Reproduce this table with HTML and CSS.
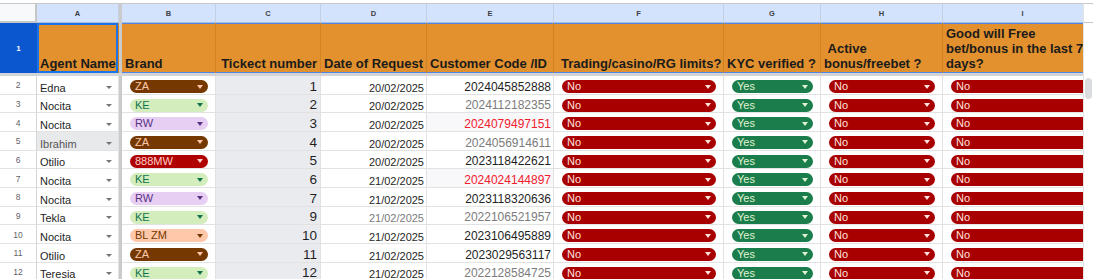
FILE: index.html
```html
<!DOCTYPE html>
<html>
<head>
<meta charset="utf-8">
<link rel="stylesheet" href="styles.css">
</head>
<body>
<div class="frame">
  <div class="viewport">
    <div class="grid">
      <div class="vdiv"></div>
      <div class="hdiv"></div>

      <div class="corner"></div>
      <div class="colh">A</div>
      <div class="colh">B</div>
      <div class="colh">C</div>
      <div class="colh">D</div>
      <div class="colh">E</div>
      <div class="colh">F</div>
      <div class="colh">G</div>
      <div class="colh">H</div>
      <div class="colh">I</div>

      <div class="rowh1">1</div>
      <div class="h active"><span>Agent Name</span></div>
      <div class="h"><span>Brand</span></div>
      <div class="h right"><span>Tickect number</span></div>
      <div class="h"><span>Date of Request</span></div>
      <div class="h"><span>Customer Code /ID</span></div>
      <div class="h pad-f"><span>Trading/casino/RG limits?</span></div>
      <div class="h"><span>KYC verified ?</span></div>
      <div class="h"><span>&nbsp;Active<br>bonus/freebet ?</span></div>
      <div class="h"><span>Good will Free<br>bet/bonus in the last 7<br>days?</span></div>

      <div class="c rh">2</div>
      <div class="c ag"><span>Edna</span><i class="dd"></i></div>
      <div class="c cc"><div class="chip za"><span>ZA</span><i class="tri"></i></div></div>
      <div class="c num">1</div>
      <div class="c dt">20/02/2025</div>
      <div class="c code">2024045852888</div>
      <div class="c cc"><div class="chip no"><span>No</span><i class="tri"></i></div></div>
      <div class="c cc"><div class="chip yes"><span>Yes</span><i class="tri"></i></div></div>
      <div class="c cc"><div class="chip no"><span>No</span><i class="tri"></i></div></div>
      <div class="c cc"><div class="chip no"><span>No</span><i class="tri"></i></div></div>

      <div class="c rh">3</div>
      <div class="c ag"><span>Nocita</span><i class="dd"></i></div>
      <div class="c cc"><div class="chip ke"><span>KE</span><i class="tri"></i></div></div>
      <div class="c num">2</div>
      <div class="c dt">20/02/2025</div>
      <div class="c code grey">2024112182355</div>
      <div class="c cc"><div class="chip no"><span>No</span><i class="tri"></i></div></div>
      <div class="c cc"><div class="chip yes"><span>Yes</span><i class="tri"></i></div></div>
      <div class="c cc"><div class="chip no"><span>No</span><i class="tri"></i></div></div>
      <div class="c cc"><div class="chip no"><span>No</span><i class="tri"></i></div></div>

      <div class="c rh">4</div>
      <div class="c ag"><span>Nocita</span><i class="dd"></i></div>
      <div class="c cc"><div class="chip rw"><span>RW</span><i class="tri"></i></div></div>
      <div class="c num">3</div>
      <div class="c dt">20/02/2025</div>
      <div class="c code red">2024079497151</div>
      <div class="c cc"><div class="chip no"><span>No</span><i class="tri"></i></div></div>
      <div class="c cc"><div class="chip yes"><span>Yes</span><i class="tri"></i></div></div>
      <div class="c cc"><div class="chip no"><span>No</span><i class="tri"></i></div></div>
      <div class="c cc"><div class="chip no"><span>No</span><i class="tri"></i></div></div>

      <div class="c rh">5</div>
      <div class="c ag hover"><span>Ibrahim</span><i class="dd"></i></div>
      <div class="c cc"><div class="chip za"><span>ZA</span><i class="tri"></i></div></div>
      <div class="c num">4</div>
      <div class="c dt">20/02/2025</div>
      <div class="c code grey">2024056914611</div>
      <div class="c cc"><div class="chip no"><span>No</span><i class="tri"></i></div></div>
      <div class="c cc"><div class="chip yes"><span>Yes</span><i class="tri"></i></div></div>
      <div class="c cc"><div class="chip no"><span>No</span><i class="tri"></i></div></div>
      <div class="c cc"><div class="chip no"><span>No</span><i class="tri"></i></div></div>

      <div class="c rh">6</div>
      <div class="c ag"><span>Otilio</span><i class="dd"></i></div>
      <div class="c cc"><div class="chip mw"><span>888MW</span><i class="tri"></i></div></div>
      <div class="c num">5</div>
      <div class="c dt">20/02/2025</div>
      <div class="c code">2023118422621</div>
      <div class="c cc"><div class="chip no"><span>No</span><i class="tri"></i></div></div>
      <div class="c cc"><div class="chip yes"><span>Yes</span><i class="tri"></i></div></div>
      <div class="c cc"><div class="chip no"><span>No</span><i class="tri"></i></div></div>
      <div class="c cc"><div class="chip no"><span>No</span><i class="tri"></i></div></div>

      <div class="c rh">7</div>
      <div class="c ag"><span>Nocita</span><i class="dd"></i></div>
      <div class="c cc"><div class="chip ke"><span>KE</span><i class="tri"></i></div></div>
      <div class="c num">6</div>
      <div class="c dt">21/02/2025</div>
      <div class="c code red">2024024144897</div>
      <div class="c cc"><div class="chip no"><span>No</span><i class="tri"></i></div></div>
      <div class="c cc"><div class="chip yes"><span>Yes</span><i class="tri"></i></div></div>
      <div class="c cc"><div class="chip no"><span>No</span><i class="tri"></i></div></div>
      <div class="c cc"><div class="chip no"><span>No</span><i class="tri"></i></div></div>

      <div class="c rh">8</div>
      <div class="c ag"><span>Nocita</span><i class="dd"></i></div>
      <div class="c cc"><div class="chip rw"><span>RW</span><i class="tri"></i></div></div>
      <div class="c num">7</div>
      <div class="c dt">21/02/2025</div>
      <div class="c code">2023118320636</div>
      <div class="c cc"><div class="chip no"><span>No</span><i class="tri"></i></div></div>
      <div class="c cc"><div class="chip yes"><span>Yes</span><i class="tri"></i></div></div>
      <div class="c cc"><div class="chip no"><span>No</span><i class="tri"></i></div></div>
      <div class="c cc"><div class="chip no"><span>No</span><i class="tri"></i></div></div>

      <div class="c rh">9</div>
      <div class="c ag"><span>Tekla</span><i class="dd"></i></div>
      <div class="c cc"><div class="chip ke"><span>KE</span><i class="tri"></i></div></div>
      <div class="c num">9</div>
      <div class="c dt grey">21/02/2025</div>
      <div class="c code grey">2022106521957</div>
      <div class="c cc"><div class="chip no"><span>No</span><i class="tri"></i></div></div>
      <div class="c cc"><div class="chip yes"><span>Yes</span><i class="tri"></i></div></div>
      <div class="c cc"><div class="chip no"><span>No</span><i class="tri"></i></div></div>
      <div class="c cc"><div class="chip no"><span>No</span><i class="tri"></i></div></div>

      <div class="c rh">10</div>
      <div class="c ag"><span>Nocita</span><i class="dd"></i></div>
      <div class="c cc"><div class="chip bl"><span>BL ZM</span><i class="tri"></i></div></div>
      <div class="c num">10</div>
      <div class="c dt">21/02/2025</div>
      <div class="c code">2023106495889</div>
      <div class="c cc"><div class="chip no"><span>No</span><i class="tri"></i></div></div>
      <div class="c cc"><div class="chip yes"><span>Yes</span><i class="tri"></i></div></div>
      <div class="c cc"><div class="chip no"><span>No</span><i class="tri"></i></div></div>
      <div class="c cc"><div class="chip no"><span>No</span><i class="tri"></i></div></div>

      <div class="c rh">11</div>
      <div class="c ag"><span>Otilio</span><i class="dd"></i></div>
      <div class="c cc"><div class="chip za"><span>ZA</span><i class="tri"></i></div></div>
      <div class="c num">11</div>
      <div class="c dt">21/02/2025</div>
      <div class="c code">2023029563117</div>
      <div class="c cc"><div class="chip no"><span>No</span><i class="tri"></i></div></div>
      <div class="c cc"><div class="chip yes"><span>Yes</span><i class="tri"></i></div></div>
      <div class="c cc"><div class="chip no"><span>No</span><i class="tri"></i></div></div>
      <div class="c cc"><div class="chip no"><span>No</span><i class="tri"></i></div></div>

      <div class="c rh">12</div>
      <div class="c ag"><span>Teresia</span><i class="dd"></i></div>
      <div class="c cc"><div class="chip ke"><span>KE</span><i class="tri"></i></div></div>
      <div class="c num">12</div>
      <div class="c dt">21/02/2025</div>
      <div class="c code grey">2022128584725</div>
      <div class="c cc"><div class="chip no"><span>No</span><i class="tri"></i></div></div>
      <div class="c cc"><div class="chip yes"><span>Yes</span><i class="tri"></i></div></div>
      <div class="c cc"><div class="chip no"><span>No</span><i class="tri"></i></div></div>
      <div class="c cc"><div class="chip no"><span>No</span><i class="tri"></i></div></div>
    </div>
  </div>
  <div class="strip">
    <div class="strip-head"></div>
    <div class="thumb"></div>
  </div>
</div>
</body>
</html>
```
FILE: styles.css
```css
* { box-sizing: border-box; }
html, body { margin: 0; padding: 0; overflow: hidden; background: #fff; }
body { font-family: "Liberation Sans", Arial, sans-serif; color: #1f1f1f; }

.frame {
  display: flex;
  height: 279px;
  padding-top: 3px;
  overflow: hidden;
}
.viewport {
  flex: none;
  width: 1083px;
  overflow: hidden;
  border-top: 1px solid #c7c7c7;
}
.grid {
  display: grid;
  width: max-content;
  grid-template-columns: 37px 82px 3px 94px 105px 106px 127px 170px 97px 122px 160px;
  grid-template-rows: 19px 50px 3px;
  grid-auto-rows: 18.66px;
}
.vdiv { grid-column: 3; grid-row: 1 / span 14; background: #c9cbcd; }
.hdiv { grid-row: 3; grid-column: 1 / -1; background: #d2d4d6; }

.corner {
  background: #f8f9fa;
  border-right: 2px solid #c4c7c5;
  border-bottom: 2px solid #c4c7c5;
}
.colh {
  display: flex;
  align-items: center;
  justify-content: center;
  background: #d3e3fd;
  border-right: 1px solid #c3cfe2;
  border-bottom: 1px solid #a9bedf;
  font: 700 7.5px "Liberation Sans", Arial, sans-serif;
  color: #3c4043;
}
.rowh1 {
  display: flex;
  align-items: center;
  justify-content: center;
  background: #0b57d0;
  color: #fff;
  font-size: 8px;
  font-weight: 700;
}

.h {
  display: flex;
  align-items: flex-end;
  padding: 0 3px 1.5px;
  background: #e2912e;
  border-right: 1px solid rgba(130, 70, 0, 0.18);
  box-shadow: inset 0 1px #4f86e6, inset 0 -1px #4f86e6;
  font-size: 13px;
  font-weight: 700;
  line-height: 15.3px;
  color: #1b1b1b;
  white-space: nowrap;
  overflow: hidden;
}
.h.right { justify-content: flex-end; }
.h.pad-f { padding-left: 7px; }
.h.active { box-shadow: inset 0 0 0 2px #1a73e8; }

.c {
  display: flex;
  align-items: flex-end;
  padding: 0 3px;
  border-right: 1px solid #e2e2e2;
  border-bottom: 1px solid #e2e2e2;
  font-size: 11px;
  white-space: nowrap;
  overflow: hidden;
}
.rh {
  align-items: center;
  justify-content: center;
  font-size: 8.5px;
  color: #5f6368;
  border-right-color: #d3d5d7;
  padding-top: 1px;
}
.ag { justify-content: space-between; padding-right: 6px; }
.ag.hover { background: #e8e9eb; color: #555; }
.dd {
  width: 0;
  height: 0;
  margin-bottom: 5px;
  border-left: 3px solid transparent;
  border-right: 3px solid transparent;
  border-top: 3px solid #757575;
}
.num {
  justify-content: flex-end;
  background: #eaebef;
  font-size: 13.5px;
}
.dt { justify-content: flex-end; padding-right: 2px; }
.code { justify-content: flex-end; font-size: 12px; padding-right: 2px; }
.grey { color: #7b7b7b; }
.red { color: #f0202c; background: #f8f8fb; }

.cc { align-items: flex-start; padding: 4px 7px 0 8px; }
.chip {
  flex: 1;
  display: flex;
  align-items: center;
  justify-content: space-between;
  height: 13px;
  padding: 0 5.5px 0 5px;
  border-radius: 7px;
  font-size: 11px;
  line-height: 13px;
}
.tri {
  width: 0;
  height: 0;
  border-left: 3.5px solid transparent;
  border-right: 3.5px solid transparent;
  border-top: 4px solid currentColor;
}
.za { background: #753800; color: #ffc8aa; }
.ke { background: #d4edbc; color: #11734b; }
.rw { background: #e6cff2; color: #5a3286; }
.mw { background: #b10202; color: #ffcfc9; }
.bl { background: #ffc8aa; color: #753800; }
.no { background: #a80000; color: #ffe2de; }
.yes { background: #1a7d4b; color: #e0f3d0; }

.strip {
  flex: none;
  width: 17px;
  border-left: 1px solid #e3e3e3;
}
.strip-head {
  width: 9px;
  height: 20px;
  border-top: 1px solid #c7c7c7;
  border-bottom: 1px solid #c7c7c7;
}
.thumb {
  width: 7px;
  height: 21px;
  margin: 55px 0 0 1px;
  border-radius: 4px;
  background: #dadce0;
}
```
